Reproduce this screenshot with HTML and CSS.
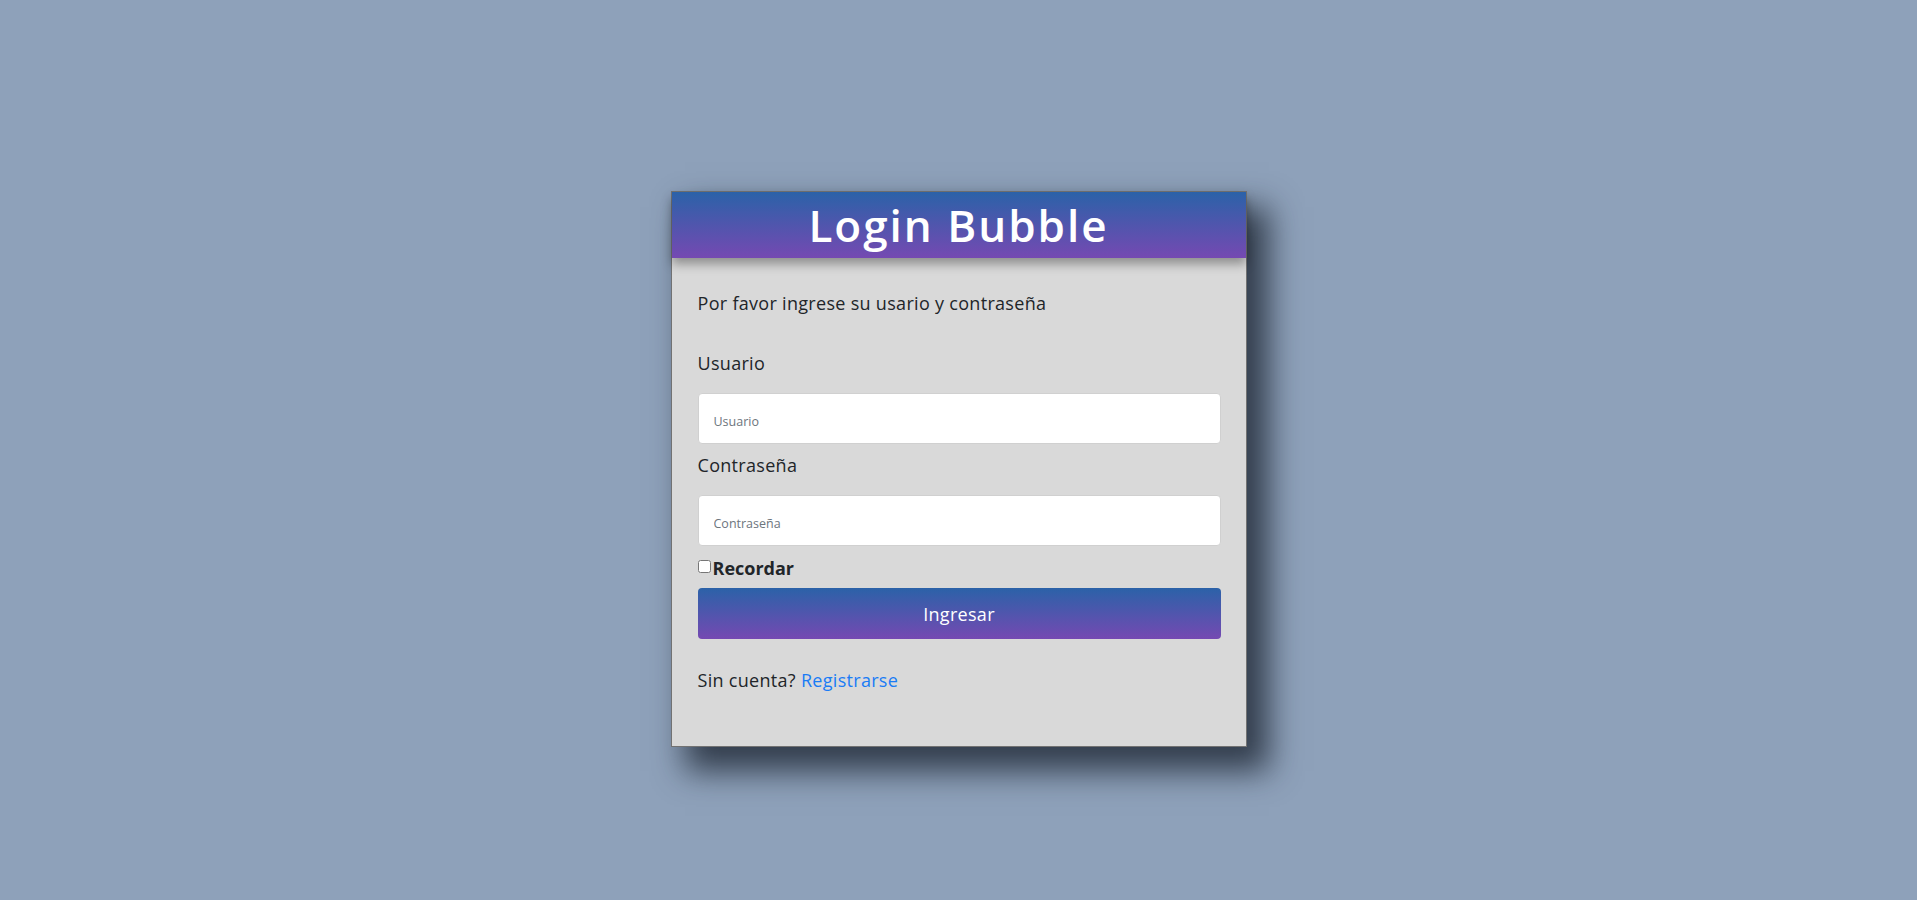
FILE: index.html
```html
<!DOCTYPE html>
<html lang="es">
<head>
<meta charset="utf-8">
<title>Login Bubble</title>
<link rel="stylesheet" href="styles.css">
</head>
<body>
<div class="card">
  <div class="card-header"><h1 class="title">Login Bubble</h1></div>
  <form class="card-body">
    <p class="intro">Por favor ingrese su usario y contraseña</p>
    <label class="label" for="user">Usuario</label>
    <input class="input" id="user" type="text" placeholder="Usuario">
    <label class="label label-second" for="pass">Contraseña</label>
    <input class="input" id="pass" type="password" placeholder="Contraseña">
    <div class="remember"><input type="checkbox" id="rem" class="check"><label for="rem" class="remember-label">Recordar</label></div>
    <button type="button" class="btn">Ingresar</button>
    <p class="signup">Sin cuenta? <a href="#" class="link">Registrarse</a></p>
  </form>
</div>
</body>
</html>
```
FILE: styles.css
```css
html, body {
  margin: 0;
  padding: 0;
}
body {
  background: #8ea1ba;
  font-family: "Open Sans", sans-serif;
  color: #212529;
  height: 900px;
  overflow: hidden;
}
.card {
  width: 574px;
  margin: 191px auto 0;
  background: #d9d9d9;
  border: 1px solid #727272;
  box-shadow: 18px 20px 30px 4px rgba(20, 28, 40, 0.75);
}
.card-header {
  height: 66px;
  display: flex;
  align-items: center;
  justify-content: center;
  background: linear-gradient(to bottom, #2b62a8, #7549b2);
  box-shadow: 0 6px 10px rgba(0, 0, 0, 0.35);
  position: relative;
}
.title {
  margin: 0;
  color: #fff;
  font-family: "Open Sans", sans-serif;
  font-weight: 600;
  font-size: 44px;
  line-height: 1;
  letter-spacing: 2px;
}
.card-body {
  display: flex;
  flex-direction: column;
  align-items: flex-start;
  padding: 32px 25px 52px 26px;
}
.intro {
  margin: 0 0 33px;
  font-size: 18px;
  line-height: 27px;
  letter-spacing: 0.3px;
}
.label {
  font-size: 18px;
  line-height: 27px;
  letter-spacing: 0.3px;
  margin-bottom: 16px;
}
.label-second {
  margin-top: 8px;
}
.input {
  box-sizing: border-box;
  width: 100%;
  height: 51px;
  border: 1px solid #d0d0d0;
  border-radius: 4px;
  background: #fff;
  padding: 6px 15px 0;
  font-family: "Open Sans", sans-serif;
  font-size: 12.5px;
  color: #495057;
  outline: none;
  margin: 0;
}
.input::placeholder {
  color: #6c757d;
}
.remember {
  display: flex;
  align-items: center;
  margin-top: 9px;
  height: 27px;
}
.check {
  width: 13px;
  height: 13px;
  margin: 0 2px 0 0;
  position: relative;
  top: -2px;
}
.remember-label {
  font-size: 18px;
  font-weight: 700;
  line-height: 27px;
}
.btn {
  width: 100%;
  height: 51px;
  margin-top: 6px;
  border: none;
  border-radius: 4px;
  background: linear-gradient(to bottom, #2b62a8, #7549b2);
  color: #fff;
  font-family: "Open Sans", sans-serif;
  font-size: 18px;
  letter-spacing: 0.3px;
  cursor: pointer;
}
.signup {
  margin: 28px 0 0;
  font-size: 18px;
  line-height: 27px;
  letter-spacing: 0.3px;
}
.link {
  color: #1a7cf5;
  text-decoration: none;
}
```
